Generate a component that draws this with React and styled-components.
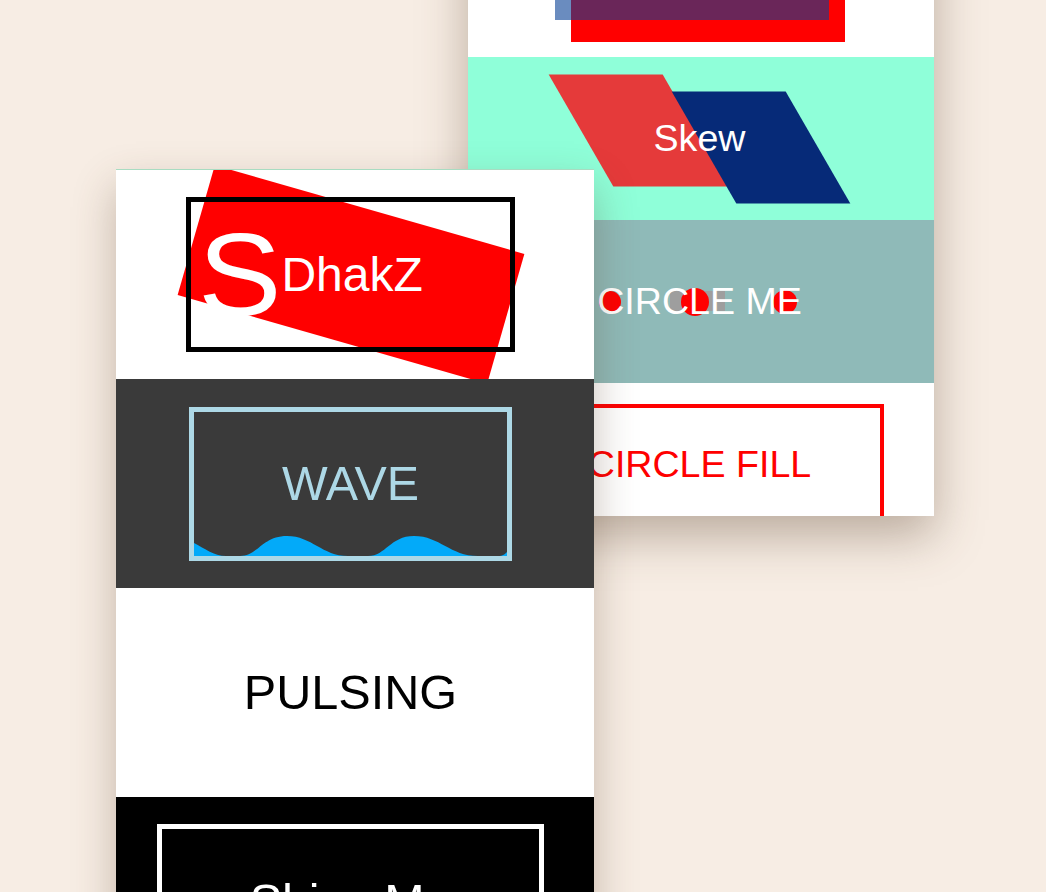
import React from 'react';
import styled, { createGlobalStyle } from 'styled-components';

const GlobalStyle = createGlobalStyle`
  html, body {
    margin: 0;
    padding: 0;
  }
  body {
    background: #f7ede4;
    font-family: 'Liberation Sans', Arial, sans-serif;
    overflow: hidden;
  }
`;

const Stage = styled.div`
  display: flex;
  align-items: flex-start;
  height: 100vh;
  padding-left: 116px;
  box-sizing: border-box;
  overflow: hidden;
`;

const LeftStack = styled.div`
  position: relative;
  z-index: 2;
  flex: 0 0 478px;
  margin-top: 169px;
  border-top: 1px solid #a9dcc2;
  box-shadow: 0 18px 40px rgba(90, 65, 45, 0.32);
`;

const RightStack = styled.div`
  position: relative;
  z-index: 1;
  flex: 0 0 466px;
  height: 622px;
  margin-top: -106px;
  margin-left: -126px;
  overflow: hidden;
  box-shadow: 0 20px 45px rgba(90, 65, 45, 0.38);
`;

const Card = styled.div`
  position: relative;
  display: flex;
  align-items: ${(p) => p.$align || 'center'};
  justify-content: center;
  height: ${(p) => p.$h}px;
  padding-right: ${(p) => p.$shift || 0}px;
  padding-bottom: ${(p) => p.$bottom || 0}px;
  box-sizing: border-box;
  background: ${(p) => p.$bg};
  overflow: hidden;
`;

/* ---- right column ---- */

const SlideWrap = styled.div`
  position: relative;
  width: 290px;
  height: 142px;
  padding: 22px 0 0 16px;
  box-sizing: border-box;
`;

const RedPanel = styled.div`
  width: 274px;
  height: 120px;
  background: #ff0000;
`;

const BluePanel = styled.div`
  position: absolute;
  top: 0;
  left: 0;
  width: 274px;
  height: 120px;
  background: rgba(7, 63, 148, 0.6);
`;

const SkewGroup = styled.div`
  position: relative;
  display: flex;
  gap: 9px;
`;

const SkewShape = styled.div`
  width: 114px;
  height: 112px;
  background: ${(p) => p.$color};
  transform: translateY(${(p) => p.$dy}px) skewX(30deg);
`;

const SkewLabel = styled.span`
  position: absolute;
  inset: 0;
  display: flex;
  align-items: center;
  justify-content: center;
  color: #fff;
  font-size: 37.6px;
  line-height: 1;
`;

const CircleText = styled.div`
  position: relative;
  font-size: 37.6px;
  line-height: 1;
  color: #fff;
`;

const TextLayer = styled.span`
  position: relative;
  z-index: 2;
`;

const Dot = styled.span`
  position: absolute;
  z-index: 1;
  left: ${(p) => p.$x}px;
  top: ${(p) => p.$y}px;
  width: ${(p) => p.$size}px;
  height: ${(p) => p.$size}px;
  border-radius: 50%;
  background: #ff0000;
`;

const GreyBlock = styled.span`
  position: absolute;
  z-index: 0;
  left: 73px;
  top: 8px;
  width: 55px;
  height: 20px;
  background: #9e9e9e;
`;

const OutlineBox = styled.div`
  display: flex;
  align-items: center;
  justify-content: center;
  width: ${(p) => p.$w}px;
  height: ${(p) => p.$hgt}px;
  box-sizing: border-box;
  border: ${(p) => p.$bw}px solid ${(p) => p.$color};
  color: ${(p) => p.$text || p.$color};
  font-size: ${(p) => p.$fs}px;
  line-height: 1;
`;

/* ---- left column ---- */

const LogoBox = styled.div`
  position: relative;
  display: flex;
  align-items: center;
  width: 329px;
  height: 155px;
  padding-left: 12px;
  box-sizing: border-box;

  &::after {
    content: '';
    position: absolute;
    inset: 0;
    border: 5px solid #000;
  }
`;

const RedBand = styled.div`
  position: absolute;
  left: 50%;
  top: 50%;
  width: 322px;
  height: 135px;
  margin: -67.5px 0 0 -161px;
  background: #ff0000;
  transform: rotate(16deg);
`;

const LogoText = styled.div`
  position: relative;
  display: flex;
  align-items: center;
  gap: 2px;
  color: #fff;
  line-height: 1;
`;

const BigS = styled.span`
  font-size: 116px;
  transform: scaleX(1.08);
  transform-origin: left center;
  margin-right: 4px;
`;

const SmallWord = styled.span`
  font-size: 48px;
`;

const WaveBox = styled(OutlineBox)`
  position: relative;
`;

const WaveSvg = styled.svg`
  position: absolute;
  left: 0;
  bottom: 0;
  width: 100%;
  height: 22px;
`;

const PlainText = styled.span`
  font-size: 48.6px;
  line-height: 1;
  color: ${(p) => p.$color};
`;

export default function App() {
  return (
    <>
      <GlobalStyle />
      <Stage>
        <LeftStack>
          <Card $h={209} $bg="#fff" $shift={9}>
            <LogoBox>
              <RedBand />
              <LogoText>
                <BigS>S</BigS>
                <SmallWord>DhakZ</SmallWord>
              </LogoText>
            </LogoBox>
          </Card>
          <Card $h={209} $bg="#3a3a3a" $shift={9}>
            <WaveBox $w={323} $hgt={154} $bw={5} $color="#add8e6" $fs={48.4}>
              WAVE
              <WaveSvg viewBox="0 0 313 22" preserveAspectRatio="none">
                <path
                  d="M0,9 C10,14 20,22 32,22 L46,22 C64,22 68,2 93,2 C118,2 128,22 154,22 L174,22 C192,22 196,2 220,2 C246,2 256,22 284,22 L304,22 C309,22 311,20 313,18 L313,22 L0,22 Z"
                  fill="#03aaf9"
                />
              </WaveSvg>
            </WaveBox>
          </Card>
          <Card $h={209} $bg="#fff" $shift={9}>
            <PlainText $color="#000">PULSING</PlainText>
          </Card>
          <Card $h={209} $bg="#000" $shift={9}>
            <OutlineBox $w={387} $hgt={155} $bw={5} $color="#fff" $fs={48.4}>
              Shiny Me
            </OutlineBox>
          </Card>
        </LeftStack>

        <RightStack>
          <Card $h={163} $bg="#fff" $shift={3} $align="flex-end" $bottom={15}>
            <SlideWrap>
              <RedPanel />
              <BluePanel />
            </SlideWrap>
          </Card>
          <Card $h={163} $bg="#8fffd9" $shift={3}>
            <SkewGroup>
              <SkewShape $color="#e53a3a" $dy={-8.5} />
              <SkewShape $color="#062a78" $dy={8.5} />
              <SkewLabel>Skew</SkewLabel>
            </SkewGroup>
          </Card>
          <Card $h={163} $bg="#8fbab8" $shift={3}>
            <CircleText>
              <Dot $x={2} $y={8} $size={22} />
              <GreyBlock />
              <Dot $x={84} $y={5} $size={28} />
              <Dot $x={176} $y={7} $size={24} />
              <TextLayer>CIRCLE ME</TextLayer>
            </CircleText>
          </Card>
          <Card $h={163} $bg="#fff" $shift={3}>
            <OutlineBox $w={368} $hgt={121} $bw={4} $color="#ff0000" $fs={37.6}>
              CIRCLE FILL
            </OutlineBox>
          </Card>
        </RightStack>
      </Stage>
    </>
  );
}
